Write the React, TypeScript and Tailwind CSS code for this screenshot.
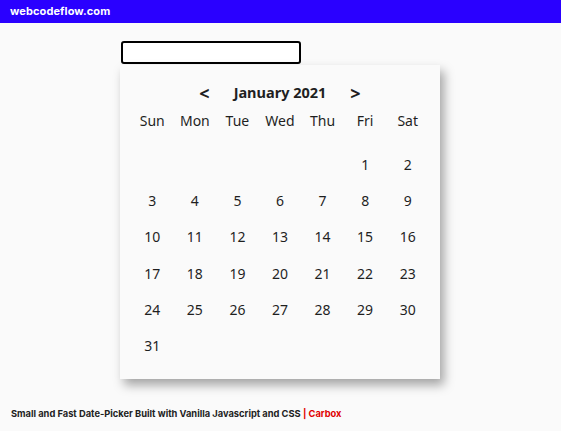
import React from "react";

const weekdays = ["Sun", "Mon", "Tue", "Wed", "Thu", "Fri", "Sat"];

export default function App() {
  // January 2021 starts on a Friday
  const cells: (number | null)[] = [
    ...Array(5).fill(null),
    ...Array.from({ length: 31 }, (_, i) => i + 1),
  ];

  return (
    <div className="min-h-screen w-full bg-[#fafafa] flex flex-col">
      <header className="h-[23px] bg-[#2a00ff] flex items-center px-[10px]">
        <span className="text-white font-bold text-[11px] font-['Inter',sans-serif] tracking-[0.1px]">
          webcodeflow.com
        </span>
      </header>

      <div className="flex-1 pl-[120px] pt-[18px]">
        <input
          type="text"
          className="block w-[180px] h-[23px] ml-[1px] bg-white border-2 border-black rounded-[3px] outline-none"
        />
        <div className="mt-[1px] w-[320px] bg-[#fafafa] shadow-[4px_6px_10px_rgba(0,0,0,0.35)] px-[11px] pt-[16px] pb-[15px] font-['Noto_Sans',sans-serif] text-[#1f1f1f]">
          <div className="h-[24px] flex items-center justify-center gap-[24px]">
            <span className="text-[18px] font-bold leading-none">&lt;</span>
            <span className="text-[14.5px] font-bold">January 2021</span>
            <span className="text-[18px] font-bold leading-none">&gt;</span>
          </div>
          <div className="grid grid-cols-7 h-[24px] mt-[3px] items-center text-[14px]">
            {weekdays.map((d) => (
              <span key={d} className="text-center">
                {d}
              </span>
            ))}
          </div>
          <div className="grid grid-cols-7 mt-[14px] text-[14px]">
            {cells.map((c, i) => (
              <span key={i} className="h-[36.3px] flex items-center justify-center">
                {c ?? ""}
              </span>
            ))}
          </div>
        </div>
      </div>

      <footer className="h-[38px] px-[11px] pt-[4px] flex items-center">
        <span className="text-[9.3px] font-bold text-[#222] font-['Inter',sans-serif]">
          Small and Fast Date-Picker Built with Vanilla Javascript and CSS{" "}
          <span className="text-[#e00000]">| Carbox</span>
        </span>
      </footer>
    </div>
  );
}
